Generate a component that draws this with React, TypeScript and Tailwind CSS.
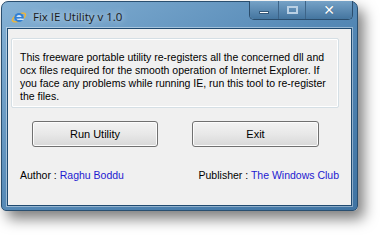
import React from 'react';

const IeIcon = () => (
  <svg width="16" height="16" viewBox="0 0 16 16">
    <ellipse cx="8" cy="8.5" rx="7.2" ry="3.2" transform="rotate(-28 8 8.5)" fill="none" stroke="#f2b632" strokeWidth="1.4" />
    <circle cx="8" cy="8.5" r="4.6" fill="#2f7fd6" />
    <circle cx="8" cy="8.5" r="2.6" fill="#cfe6fb" />
    <rect x="3.6" y="8" width="8.8" height="1.6" fill="#2f7fd6" />
    <rect x="8.6" y="9.6" width="4" height="1.4" fill="#cfe6fb" />
  </svg>
);

const CaptionButtons = () => (
  <div className="flex h-[19px] rounded-b-[5px] border border-t-0 border-[#2b4d6c] overflow-hidden shadow-[inset_0_-1px_0_rgba(255,255,255,0.35)]">
    <div className="w-[29px] flex items-center justify-center border-r border-[#3d6488] bg-gradient-to-b from-[#76a2c7] to-[#44759f]">
      <div className="w-[10px] h-[3px] mt-[5px] bg-white border border-[#35597a]" />
    </div>
    <div className="w-[27px] flex items-center justify-center border-r border-[#3d6488] bg-gradient-to-b from-[#76a2c7] to-[#44759f]">
      <div className="w-[11px] h-[8px] border-2 border-[#b9d0e4]" />
    </div>
    <div className="w-[46px] flex items-center justify-center bg-gradient-to-b from-[#76a2c7] to-[#44759f]">
      <span className="text-white font-bold text-[14px] leading-none" style={{ fontFamily: '"DejaVu Sans", sans-serif', textShadow: '0 0 1px #35597a' }}>✕</span>
    </div>
  </div>
);

const WinButton = ({ label, w }: { label: string; w: string }) => (
  <button className={`${w} h-[26px] rounded-[3px] border border-[#707070] bg-gradient-to-b from-[#f3f3f3] via-[#e8e8e8] to-[#d8d8d8] text-[11px] text-black shadow-[inset_0_0_0_1px_#fcfcfc]`}>
    {label}
  </button>
);

export default function App() {
  return (
    <div className="w-[386px] h-[239px] bg-white pl-[1px] pt-[1px]" style={{ fontFamily: '"Liberation Sans", Arial, sans-serif' }}>
      <div className="w-[357px] h-[210px] rounded-t-[7px] rounded-b-[5px] border border-[#2a4f70] bg-gradient-to-br from-[#86b2d5] via-[#5589b6] to-[#3f74a3] shadow-[6px_8px_14px_rgba(0,0,0,0.5)] flex flex-col px-[5px] pb-[4px]">
        <div className="h-[26px] flex items-start justify-between">
          <div className="flex items-center gap-[6px] pl-[4px] pt-[6px]">
            <IeIcon />
            <span className="text-[11.5px] text-[#1a1a1a]" style={{ fontFamily: '"Open Sans", sans-serif', textShadow: '0 0 6px rgba(255,255,255,0.9)' }}>
              Fix IE Utility v 1.0
            </span>
          </div>
          <div className="-mt-[1px] mr-[-1px]">
            <CaptionButtons />
          </div>
        </div>
        <div className="flex-1 border border-[#1f4a70] shadow-[0_0_0_1px_rgba(255,255,255,0.4)] bg-[#f0f0f0] px-[3px] pt-[9px]">
          <div className="w-[328px] h-[70px] border border-[#d5dfe5] rounded-[2px] shadow-[inset_0_0_0_1px_#ffffff] pl-[8px] pr-[4px] pt-[12px] text-[10.5px] leading-[13px] text-black">
            This freeware portable utility re-registers all the concerned dll and ocx files required for the smooth operation of Internet Explorer. If you face any problems while running IE, run this tool to re-register the files.
          </div>
          <div className="flex pl-[21px] gap-[34px] mt-[13px]">
            <WinButton label="Run Utility" w="w-[126px]" />
            <WinButton label="Exit" w="w-[127px]" />
          </div>
          <div className="flex justify-between pl-[9px] pr-[9px] mt-[21px] text-[10.5px] leading-[14px]">
            <span>
              <span className="text-black">Author : </span>
              <span className="text-[#1d1ad0]">Raghu Boddu</span>
            </span>
            <span>
              <span className="text-black">Publisher : </span>
              <span className="text-[#1d1ad0]">The Windows Club</span>
            </span>
          </div>
        </div>
      </div>
    </div>
  );
}
